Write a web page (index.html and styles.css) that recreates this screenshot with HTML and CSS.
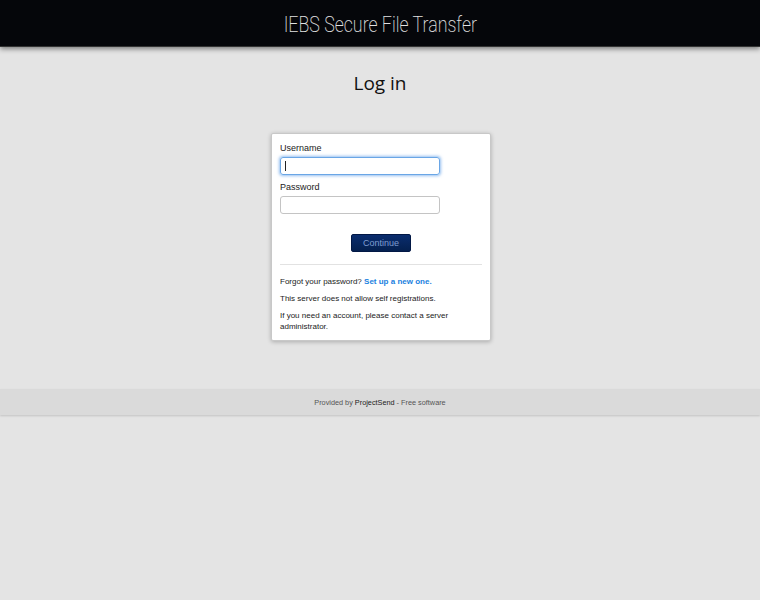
FILE: index.html
```html
<!DOCTYPE html>
<html>
<head>
<meta charset="utf-8">
<link rel="stylesheet" href="styles.css">
</head>
<body>
<header class="topbar"><h1 class="site-title">IEBS Secure File Transfer</h1></header>
<main class="main">
  <h2 class="page-title">Log in</h2>
  <div class="card">
    <form class="login-form">
      <label class="label" for="u">Username</label>
      <div class="input focused"><span class="caret"></span></div>
      <label class="label" for="p">Password</label>
      <div class="input"></div>
      <div class="actions"><button type="button" class="btn">Continue</button></div>
    </form>
    <div class="sep"></div>
    <p class="note">Forgot your password? <a class="link">Set up a new one.</a></p>
    <p class="note">This server does not allow self registrations.</p>
    <p class="note">If you need an account, please contact a server administrator.</p>
  </div>
</main>
<footer class="footer">Provided by <span class="brand">ProjectSend</span> - Free software</footer>
</body>
</html>
```
FILE: styles.css
```css
html, body { margin: 0; padding: 0; }
body {
  background: #e4e4e4;
  font-family: "Liberation Sans", Arial, sans-serif;
  min-height: 600px;
}
.topbar {
  background: #05060a;
  height: 46px;
  box-shadow: 0 2px 5px rgba(0,0,0,0.45);
  display: flex;
  align-items: center;
  justify-content: center;
  border-bottom: 1px solid #333;
}
.site-title {
  margin: 2px 0 0;
  font-family: "Roboto", sans-serif;
  font-weight: 200;
  font-size: 22px;
  color: #e2e2e2;
  transform: scaleX(0.81);
}
.main {
  display: flex;
  flex-direction: column;
  align-items: center;
  padding-top: 23px;
}
.page-title {
  margin: 0;
  font-family: "Open Sans", sans-serif;
  font-weight: 400;
  font-size: 19px;
  color: #111;
  line-height: 26px;
}
.card {
  margin-top: 37px;
  margin-left: 2px;
  width: 202px;
  background: #fff;
  border: 1px solid #c8c8c8;
  border-radius: 2px;
  box-shadow: 0 1px 4px rgba(0,0,0,0.25);
  padding: 8px;
}
.login-form { display: flex; flex-direction: column; }
.label {
  font-size: 9px;
  color: #222;
  line-height: 12px;
  margin-bottom: 3px;
}
.input {
  width: 156px;
  height: 14px;
  border: 1px solid #c4c4c4;
  border-radius: 3px;
  margin-bottom: 6px;
  display: flex;
  align-items: center;
  padding: 1px;
}
.input.focused {
  border-color: #6aa6e6;
  box-shadow: 0 0 3px 1px rgba(80,150,230,0.6);
}
.caret { display: block; width: 1px; height: 10px; background: #222; margin-left: 3px; }
.actions { display: flex; justify-content: center; margin-top: 14px; }
.btn {
  width: 60px;
  height: 18px;
  border: 1px solid #021845;
  border-radius: 2px;
  background: linear-gradient(#0a2d6e, #04204f);
  color: #7f9dd0;
  font-family: "Liberation Sans", Arial, sans-serif;
  font-size: 9px;
  padding: 0;
}
.sep { height: 1px; background: #e2e2e2; margin: 12px 0 11px; }
.note {
  margin: 0 0 6px;
  font-size: 8px;
  line-height: 11px;
  color: #222;
}
.note:last-child { margin-bottom: 0; }
.link { color: #1a7fe0; font-weight: bold; }
.footer {
  margin-top: 48px;
  height: 26px;
  background: #dadada;
  box-shadow: 0 1px 2px rgba(0,0,0,0.15);
  display: flex;
  align-items: center;
  justify-content: center;
  font-size: 7.3px;
  color: #555;
}
.brand { color: #222; margin: 0 2px; }
```
